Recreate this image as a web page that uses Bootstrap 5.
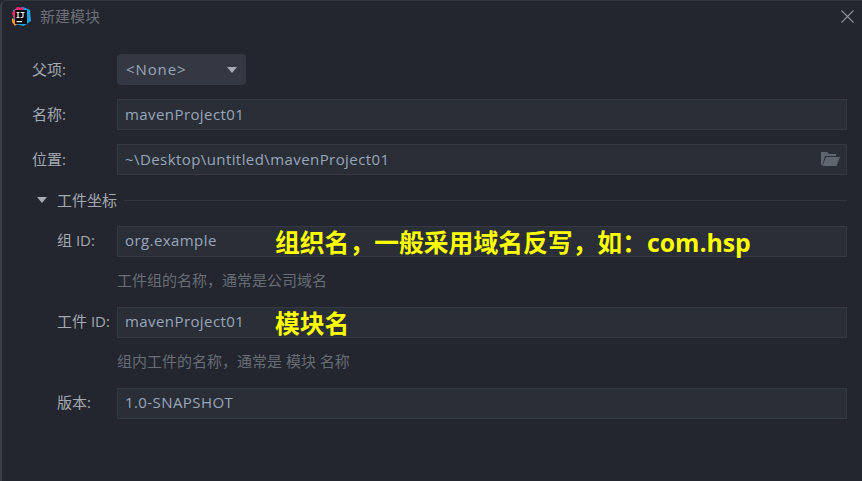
<!DOCTYPE html>
<html lang="zh-CN">
<head>
  <meta charset="UTF-8" />
  <meta name="viewport" content="width=device-width, initial-scale=1.0"/>
  <title>新建模块</title>
  <link href="https://cdn.jsdelivr.net/npm/bootstrap@5.3.0/dist/css/bootstrap.min.css" rel="stylesheet"/>
  <style>
    html, body { height: 100%; }
    body { background: #23262e; font-family: "Open Sans", "Noto Sans CJK SC", sans-serif; font-size: 15px; color: #a4a9b2; overflow: hidden; }
    .win { height: 481px; border-left: 2px solid #3a3d44; border-top: 1px solid #33363d; border-top-left-radius: 6px; }
    .title-bar { height: 30px; padding: 0 8px 0 9px; }
    .title-text { color: #6d7078; margin-left: 8px; }
    .form-area { padding: 23px 15px 0 30px; }
    .form-line { height: 31px; margin-bottom: 14px; }
    .form-label-txt { width: 85px; flex-shrink: 0; }
    .sub-label { width: 60px; flex-shrink: 0; margin-top: -2px; }
    .sub-rows { padding-left: 25px; }
    .sub-rows .fake-input { line-height: 27px; }
    .fake-input { flex: 1; height: 31px; background: #2a2e37; border: 1px solid #353944; padding: 0 7px; color: #99a6ba; line-height: 29px; letter-spacing: .42px; position: relative; }
    .fake-select { width: 129px; height: 31px; background: #343842; border-radius: 4px; padding: 0 9px; color: #99a6ba; letter-spacing: .9px; }
    .caret-down { width: 0; height: 0; border-left: 5.5px solid transparent; border-right: 5.5px solid transparent; border-top: 6px solid #a6abb4; }
    .section-head { height: 22px; margin: 4px 0 15px; padding-left: 5px; }
    .section-title { margin: 0 7px 0 10px; }
    .section-rule { flex: 1; height: 1px; background: #32363f; }
    .hint { height: 50px; margin-left: 60px; color: #686d76; line-height: 47px; }
    .note { position: absolute; left: 157px; top: -2px; color: #ffff00; font-weight: 700; font-size: 24.8px; line-height: 34px; white-space: nowrap; letter-spacing: 0; }
    .folder-icon { position: absolute; right: 6px; top: 7px; }
    .close-icon { display: block; }
  </style>
</head>
<body>
  <div class="win">
    <!-- title bar -->
    <div class="title-bar d-flex align-items-center justify-content-between">
      <div class="d-flex align-items-center">
        <svg width="21" height="21" viewBox="0 0 21 21">
          <path d="M2 4 L12 1 L19 4 L20 15 L13 20 L3 18 Z" fill="#1a9fe8"/>
          <path d="M1 7 L6 1 L13 2 L9 12 L3 13 Z" fill="#f0266f"/>
          <path d="M1 12 L7 17 L4 20 L1 16 Z" fill="#fd9a2c"/>
          <rect x="4" y="4" width="12" height="14" fill="#0a0a0d"/>
          <rect x="5.5" y="15" width="5.5" height="1.2" fill="#e8e8e8"/>
          <path d="M5.5 6.5 H8.5 M7 6.5 V11.5 M5.5 11.5 H8.5 M9.5 6.5 H13.5 M12 6.5 V10.5 Q12 11.5 10.5 11.5 H9.5" stroke="#eeeeee" stroke-width="1.2" fill="none"/>
        </svg>
        <span class="title-text">新建模块</span>
      </div>
      <svg class="close-icon" width="13" height="13" viewBox="0 0 13 13"><path d="M.5 .5 L12.5 12.5 M12.5 .5 L.5 12.5" stroke="#8d9097" stroke-width="1.1"/></svg>
    </div>

    <div class="form-area">
      <div class="form-line d-flex align-items-center">
        <div class="form-label-txt">父项:</div>
        <div class="fake-select d-flex align-items-center justify-content-between">
          <span>&lt;None&gt;</span><span class="caret-down"></span>
        </div>
      </div>
      <div class="form-line d-flex align-items-center">
        <div class="form-label-txt">名称:</div>
        <div class="fake-input">mavenProject01</div>
      </div>
      <div class="form-line d-flex align-items-center">
        <div class="form-label-txt">位置:</div>
        <div class="fake-input">~\Desktop\untitled\mavenProject01
          <svg class="folder-icon" width="19" height="15" viewBox="0 0 19 15">
            <path d="M0 0 H6 L8 2 H15 V4 H4 L1.5 13 H0 Z" fill="#5f6670"/>
            <path d="M5 5 H19 L15.5 14 H1.5 Z" fill="#5f6670"/>
          </svg>
        </div>
      </div>

      <div class="section-head d-flex align-items-center">
        <span class="caret-down"></span>
        <span class="section-title">工件坐标</span>
        <span class="section-rule"></span>
      </div>

      <div class="sub-rows">
        <div class="d-flex align-items-center">
          <div class="sub-label">组 ID:</div>
          <div class="fake-input">org.example<span class="note">组织名，一般采用域名反写，如：com.hsp</span></div>
        </div>
        <div class="hint">工件组的名称，通常是公司域名</div>
        <div class="d-flex align-items-center">
          <div class="sub-label">工件 ID:</div>
          <div class="fake-input">mavenProject01<span class="note">模块名</span></div>
        </div>
        <div class="hint">组内工件的名称，通常是 模块 名称</div>
        <div class="d-flex align-items-center">
          <div class="sub-label">版本:</div>
          <div class="fake-input">1.0-SNAPSHOT</div>
        </div>
      </div>
    </div>
  </div>
  <script src="https://cdn.jsdelivr.net/npm/bootstrap@5.3.0/dist/js/bootstrap.bundle.min.js"></script>
</body>
</html>
